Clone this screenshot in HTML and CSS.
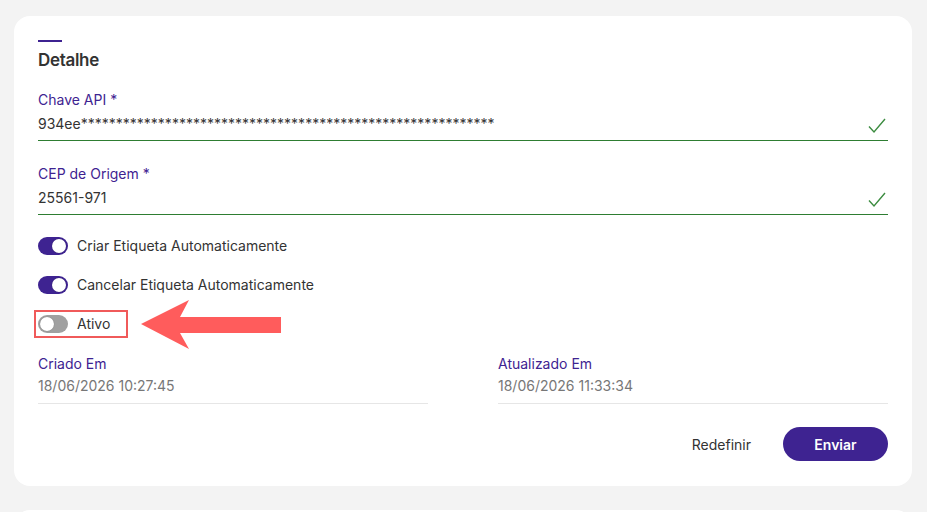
FILE: index.html
```html
<!DOCTYPE html>
<html lang="pt-BR">
<head>
  <meta charset="UTF-8">
  <title>Detalhe</title>
  <meta name="viewport" content="width=device-width, initial-scale=1.0">
  <link rel="stylesheet" href="styles.css">
</head>
<body>
  <div class="card">
    <div class="titulo-barra"></div>
    <h2>Detalhe</h2>

    <div class="campo">
      <label>Chave API *</label>
      <div class="valor valido">
        <span>934ee***********************************************************</span>
        <svg class="check" width="18" height="16" viewBox="0 0 18 16"><path d="M1 8.5 L6 14 L17 1" fill="none" stroke="#3c8c40" stroke-width="1.4"/></svg>
      </div>
    </div>

    <div class="campo">
      <label>CEP de Origem *</label>
      <div class="valor valido">
        <span>25561-971</span>
        <svg class="check" width="18" height="16" viewBox="0 0 18 16"><path d="M1 8.5 L6 14 L17 1" fill="none" stroke="#3c8c40" stroke-width="1.4"/></svg>
      </div>
    </div>

    <div class="opcoes">
      <div class="opcao">
        <span class="toggle ligado"></span>
        Criar Etiqueta Automaticamente
      </div>
      <div class="opcao">
        <span class="toggle ligado"></span>
        Cancelar Etiqueta Automaticamente
      </div>
      <div class="opcao destaque">
        <span class="toggle"></span>
        Ativo
        <span class="marcador"></span>
        <svg class="seta" width="142" height="50" viewBox="0 0 142 50">
          <polygon points="0,24 48,0 39,17 140,17 140,33 39,33 48,49" fill="#ff5c5c"/>
        </svg>
      </div>
    </div>

    <div class="datas">
      <div class="data">
        <label>Criado Em</label>
        <div class="data-valor">18/06/2026 10:27:45</div>
      </div>
      <div class="data">
        <label>Atualizado Em</label>
        <div class="data-valor">18/06/2026 11:33:34</div>
      </div>
    </div>

    <div class="acoes">
      <button class="btn-texto">Redefinir</button>
      <button class="btn-enviar">Enviar</button>
    </div>
  </div>

  <div class="card card-proximo"></div>
</body>
</html>
```

FILE: styles.css
```css
body {
  font-family: Inter, "Noto Sans", sans-serif;
  background-color: #f3f3f3;
  color: #333;
  margin: 0;
  padding: 16px 15px 0 14px;
  overflow: hidden;
}
.card {
  background: #fff;
  border-radius: 16px;
  padding: 24px 24px 25px 24px;
}
.card-proximo {
  margin-top: 24px;
  height: 60px;
}
.titulo-barra {
  width: 24px;
  height: 2px;
  background: #3e2391;
}
h2 {
  margin: 6px 0 0;
  font-size: 17px;
  font-weight: 600;
  line-height: 24px;
  color: #333;
  letter-spacing: -0.3px;
}
.campo {
  margin-top: 18px;
}
.campo + .campo {
  margin-top: 23px;
}
label {
  display: block;
  font-size: 14px;
  line-height: 20px;
  color: #3e2391;
}
.valor {
  display: flex;
  justify-content: space-between;
  align-items: flex-start;
  margin-top: 4px;
  height: 26px;
  font-size: 14px;
  line-height: 20px;
  border-bottom: 1px solid #ccc;
}
.valor.valido {
  border-bottom-color: #2e7d32;
}
.check {
  margin: 4px 2px 0 0;
}
.opcoes {
  margin-top: 22px;
  display: flex;
  flex-direction: column;
  gap: 21px;
}
.opcao {
  position: relative;
  display: flex;
  align-items: center;
  gap: 9px;
  font-size: 14px;
  line-height: 18px;
  color: #333;
}
.toggle {
  position: relative;
  width: 30px;
  height: 18px;
  border-radius: 9px;
  background: #a0a0a0;
  flex-shrink: 0;
}
.toggle::after {
  content: "";
  position: absolute;
  top: 2px;
  left: 2px;
  width: 14px;
  height: 14px;
  border-radius: 50%;
  background: #fff;
  box-shadow: 0 0 1px rgba(0, 0, 0, 0.4);
}
.toggle.ligado {
  background: #3e2391;
}
.toggle.ligado::after {
  left: 14px;
}
/* caixa e seta de destaque sobre a opção "Ativo" */
.marcador {
  position: absolute;
  left: -4px;
  top: -5px;
  width: 94px;
  height: 28px;
  box-sizing: border-box;
  border: 2.5px solid #f05a5a;
}
.seta {
  position: absolute;
  left: 103px;
  top: -15px;
}
.datas {
  margin-top: 21px;
  display: grid;
  grid-template-columns: 1fr 1fr;
  gap: 70px;
}
.data-valor {
  margin-top: 2px;
  font-size: 14px;
  line-height: 20px;
  color: #777;
  padding-bottom: 7px;
  border-bottom: 1px solid #e6e6e6;
}
.acoes {
  display: flex;
  justify-content: flex-end;
  align-items: center;
  gap: 32px;
  margin-top: 23px;
}
button {
  font-family: inherit;
  font-size: 14px;
  cursor: pointer;
  border: none;
}
.btn-texto {
  background: none;
  color: #333;
  padding: 0;
}
.btn-enviar {
  width: 105px;
  height: 34px;
  border-radius: 17px;
  background: #3e2391;
  color: #fff;
  font-weight: 600;
}
```
